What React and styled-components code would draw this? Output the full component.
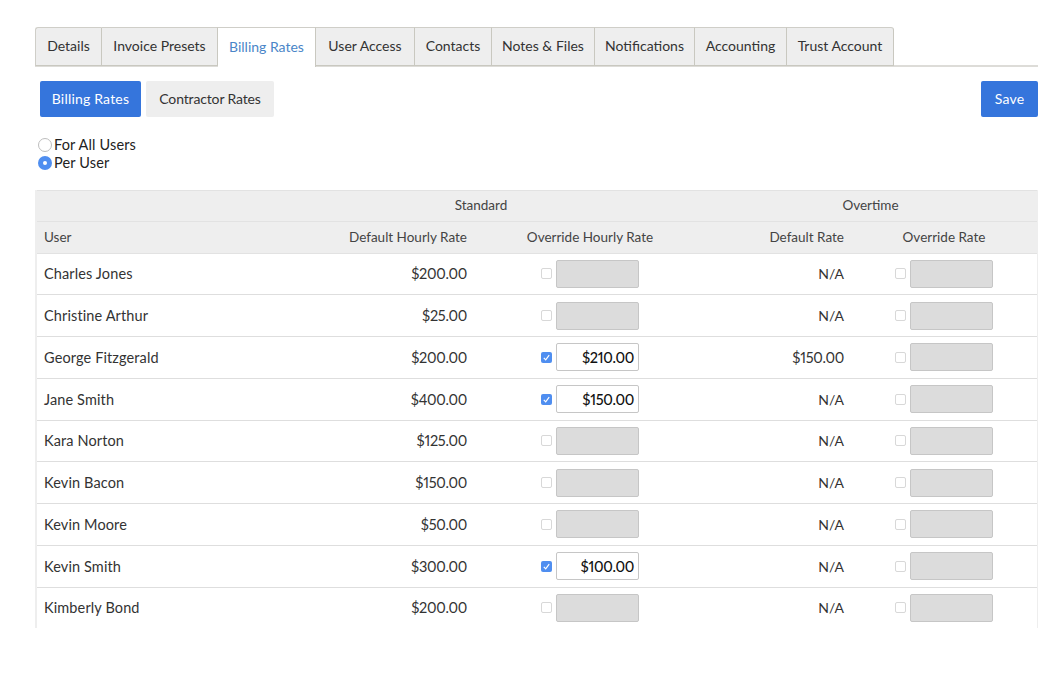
import React from "react";
import styled, { createGlobalStyle } from "styled-components";

const Global = createGlobalStyle`
  html, body { margin: 0; padding: 0; background: #fff; }
  body { font-family: "Lato", "Liberation Sans", sans-serif; color: #333; font-size: 14px; font-variant-numeric: proportional-nums; }
`;

const Page = styled.div`
  width: 1046px;
  height: 686px;
  padding: 27px 8px 0 35px;
  box-sizing: border-box;
  overflow: hidden;
`;

const TabBar = styled.div`
  display: flex;
  height: 40px;
  box-sizing: border-box;
  border-bottom: 2px solid #dddcd8;
`;

const Tab = styled.div`
  width: ${(p) => p.$w}px;
  height: ${(p) => (p.$active ? 40 : 39)}px;
  box-sizing: border-box;
  display: flex;
  align-items: center;
  justify-content: center;
  background: ${(p) => (p.$active ? "#fff" : "#eee")};
  color: ${(p) => (p.$active ? "#4a86c8" : "#333")};
  border-top: 1px solid #cfcec8;
  border-right: 1px solid #c9c8c0;
  border-left: ${(p) => (p.$first ? "1px solid #cfcec8" : "none")};
  border-bottom: ${(p) => (p.$active ? "none" : "1px solid #c9c8c0")};
  border-radius: ${(p) => (p.$first ? "3px 0 0 0" : p.$last ? "0 3px 0 0" : "0")};
  font-size: 14px;
  padding-bottom: 3px;
`;

const Toolbar = styled.div`
  display: flex;
  align-items: flex-start;
  gap: 5px;
  padding: 14px 0 0 5px;
`;

const Btn = styled.div`
  height: 36px;
  width: ${(p) => p.$w}px;
  box-sizing: border-box;
  border-radius: 2px;
  display: flex;
  align-items: center;
  justify-content: center;
  padding-bottom: 2px;
  font-size: 14px;
  letter-spacing: ${(p) => (p.$primary ? "0.2px" : "-0.15px")};
  background: ${(p) => (p.$primary ? "#3575dc" : "#eee")};
  color: ${(p) => (p.$primary ? "#fff" : "#333")};
  margin-left: ${(p) => (p.$right ? "auto" : "0")};
`;

const RadioGroup = styled.div`
  padding: 18px 0 0 3px;
  display: flex;
  flex-direction: column;
`;

const RadioRow = styled.div`
  display: flex;
  align-items: center;
  gap: 2px;
  height: 18px;
  font-size: 14.5px;
  letter-spacing: 0.15px;
  color: #222;
`;

const RadioDot = styled.span`
  width: 14px;
  height: 14px;
  margin-top: 1px;
  box-sizing: border-box;
  border-radius: 50%;
  display: flex;
  align-items: center;
  justify-content: center;
  background: ${(p) => (p.$on ? "#4f8ef0" : "#fff")};
  border: ${(p) => (p.$on ? "none" : "1px solid #bdbdbd")};
  &::after {
    content: "";
    display: ${(p) => (p.$on ? "block" : "none")};
    width: 4px;
    height: 4px;
    border-radius: 50%;
    background: #fff;
  }
`;

const TableClip = styled.div`
  margin: 19px 0 0 0;
  height: 438px;
  overflow: hidden;
  border-left: 2px solid #eee;
  border-right: 1px solid #eee;
`;

const Row = styled.div`
  display: grid;
  grid-template-columns: 220px 218px 230px 147px 1fr;
  align-items: center;
  box-sizing: border-box;
  padding-right: 1px;
  height: ${(p) => p.$h}px;
  background: ${(p) => (p.$head ? "#eee" : "#fff")};
  border-bottom: 1px solid ${(p) => (p.$head ? "#e2e2e2" : "#dedede")};
  border-top: ${(p) => (p.$top ? "1px solid #e2e2e2" : "none")};
`;

const Span = styled.div`
  grid-column: ${(p) => p.$col};
  text-align: center;
  font-size: 13.5px;
  color: #444;
  padding-bottom: 2px;
`;

const HeadCell = styled.div`
  font-size: 13.5px;
  color: #444;
  text-align: ${(p) => p.$align || "left"};
  padding: ${(p) => (p.$align === "right" ? "0 8px 1px 0" : p.$align === "center" ? "0 0 1px" : "0 0 1px 7px")};
`;

const NameCell = styled.div`
  font-size: 14.5px;
  letter-spacing: 0.12px;
  color: #333;
  padding-left: 7px;
`;

const MoneyCell = styled.div`
  font-size: ${(p) => (p.$na ? "14px" : "14.5px")};
  letter-spacing: ${(p) => (p.$na ? "0" : "-0.27px")};
  color: #333;
  text-align: right;
  padding-right: 8px;
`;

const OverrideCell = styled.div`
  display: flex;
  align-items: center;
  justify-content: center;
  gap: 4px;
`;

const Check = styled.span`
  width: 11px;
  height: 11px;
  box-sizing: border-box;
  border-radius: 2px;
  display: flex;
  align-items: center;
  justify-content: center;
  background: ${(p) => (p.$on ? "#4f8ef0" : "#fff")};
  border: ${(p) => (p.$on ? "none" : "1px solid #d8d8d8")};
`;

const RateBox = styled.div`
  width: 83px;
  height: 28px;
  box-sizing: border-box;
  border-radius: 2px;
  border: 1px solid #c6c6c6;
  background: ${(p) => (p.$on ? "#fff" : "#dcdcdc")};
  color: #111;
  font-size: 14.5px;
  font-weight: 500;
  letter-spacing: -0.3px;
  display: flex;
  align-items: center;
  justify-content: flex-end;
  padding-right: 4px;
`;

const Tick = () => (
  <svg width="9" height="9" viewBox="0 0 9 9" fill="none">
    <path d="M1.8 4.8 L3.7 6.8 L7.2 2.2" stroke="#fff" strokeWidth="1.2" />
  </svg>
);

const Override = ({ value }) => (
  <OverrideCell>
    <Check $on={!!value}>{value && <Tick />}</Check>
    <RateBox $on={!!value}>{value}</RateBox>
  </OverrideCell>
);

const tabs = [
  ["Details", 67],
  ["Invoice Presets", 116],
  ["Billing Rates", 98],
  ["User Access", 99],
  ["Contacts", 77],
  ["Notes & Files", 103],
  ["Notifications", 100],
  ["Accounting", 92],
  ["Trust Account", 107],
];

const rows = [
  ["Charles Jones", "$200.00", null, "N/A"],
  ["Christine Arthur", "$25.00", null, "N/A"],
  ["George Fitzgerald", "$200.00", "$210.00", "$150.00"],
  ["Jane Smith", "$400.00", "$150.00", "N/A"],
  ["Kara Norton", "$125.00", null, "N/A"],
  ["Kevin Bacon", "$150.00", null, "N/A"],
  ["Kevin Moore", "$50.00", null, "N/A"],
  ["Kevin Smith", "$300.00", "$100.00", "N/A"],
  ["Kimberly Bond", "$200.00", null, "N/A"],
];

export default function App() {
  return (
    <Page>
      <Global />
      <TabBar>
        {tabs.map(([t, w], i) => (
          <Tab key={t} $w={w} $first={i === 0} $last={i === tabs.length - 1} $active={t === "Billing Rates"}>
            {t}
          </Tab>
        ))}
      </TabBar>
      <Toolbar>
        <Btn $primary $w={101}>Billing Rates</Btn>
        <Btn $w={128}>Contractor Rates</Btn>
        <Btn $primary $right $w={57}>Save</Btn>
      </Toolbar>
      <RadioGroup>
        <RadioRow><RadioDot />For All Users</RadioRow>
        <RadioRow><RadioDot $on />Per User</RadioRow>
      </RadioGroup>
      <TableClip>
        <Row $head $top $h={32}>
          <Span $col="2 / span 2">Standard</Span>
          <Span $col="4 / span 2">Overtime</Span>
        </Row>
        <Row $head $h={31.5}>
          <HeadCell>User</HeadCell>
          <HeadCell $align="right">Default Hourly Rate</HeadCell>
          <HeadCell $align="center">Override Hourly Rate</HeadCell>
          <HeadCell $align="right">Default Rate</HeadCell>
          <HeadCell $align="center">Override Rate</HeadCell>
        </Row>
        {rows.map(([name, rate, over, def]) => (
          <Row key={name} $h={41.75}>
            <NameCell>{name}</NameCell>
            <MoneyCell>{rate}</MoneyCell>
            <Override value={over} />
            <MoneyCell $na={def === "N/A"}>{def}</MoneyCell>
            <Override />
          </Row>
        ))}
      </TableClip>
    </Page>
  );
}
